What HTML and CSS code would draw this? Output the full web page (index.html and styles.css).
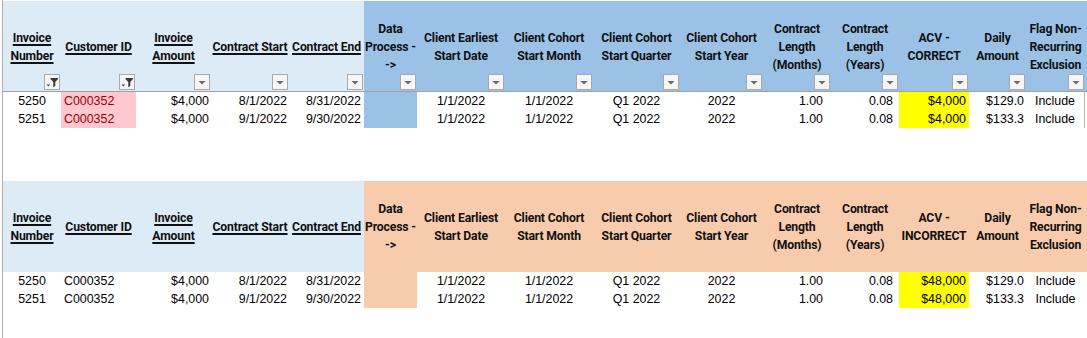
FILE: index.html
```html
<!DOCTYPE html>
<html>
<head>
<meta charset="utf-8">
<link rel="stylesheet" href="styles.css">
</head>
<body>
<div class="sheet">
  <div class="tbl top">
    <div class="row head blue">
      <div class="hc lb"><span class="u">Invoice<br>Number</span><span class="fb"><svg viewBox="0 0 14 14"><path d="M5.5 3h7.5v1l-2.7 3.1v3.9l-2 1.3V7.1L5.5 4z" fill="#3a3a3a"/><path d="M1.5 9.5h3.6L3.3 11.5z" fill="#3a3a3a"/></svg></span></div>
      <div class="hc lb"><span class="u">Customer ID</span><span class="fb"><svg viewBox="0 0 14 14"><path d="M5.5 3h7.5v1l-2.7 3.1v3.9l-2 1.3V7.1L5.5 4z" fill="#3a3a3a"/><path d="M1.5 9.5h3.6L3.3 11.5z" fill="#3a3a3a"/></svg></span></div>
      <div class="hc lb"><span class="u">Invoice<br>Amount</span><span class="fb"><svg viewBox="0 0 14 14"><path d="M3.5 6h7L7 9.5z" fill="#6a6a6a"/></svg></span></div>
      <div class="hc lb"><span class="u">Contract Start</span><span class="fb"><svg viewBox="0 0 14 14"><path d="M3.5 6h7L7 9.5z" fill="#6a6a6a"/></svg></span></div>
      <div class="hc lb"><span class="u">Contract End</span><span class="fb"><svg viewBox="0 0 14 14"><path d="M3.5 6h7L7 9.5z" fill="#6a6a6a"/></svg></span></div>
      <div class="hc"><span>Data<br>Process -<br>-&gt;</span><span class="fb"><svg viewBox="0 0 14 14"><path d="M3.5 6h7L7 9.5z" fill="#6a6a6a"/></svg></span></div>
      <div class="hc"><span>Client Earliest<br>Start Date</span><span class="fb"><svg viewBox="0 0 14 14"><path d="M3.5 6h7L7 9.5z" fill="#6a6a6a"/></svg></span></div>
      <div class="hc"><span>Client Cohort<br>Start Month</span><span class="fb"><svg viewBox="0 0 14 14"><path d="M3.5 6h7L7 9.5z" fill="#6a6a6a"/></svg></span></div>
      <div class="hc"><span>Client Cohort<br>Start Quarter</span><span class="fb"><svg viewBox="0 0 14 14"><path d="M3.5 6h7L7 9.5z" fill="#6a6a6a"/></svg></span></div>
      <div class="hc"><span>Client Cohort<br>Start Year</span><span class="fb"><svg viewBox="0 0 14 14"><path d="M3.5 6h7L7 9.5z" fill="#6a6a6a"/></svg></span></div>
      <div class="hc"><span>Contract<br>Length<br>(Months)</span><span class="fb"><svg viewBox="0 0 14 14"><path d="M3.5 6h7L7 9.5z" fill="#6a6a6a"/></svg></span></div>
      <div class="hc"><span>Contract<br>Length<br>(Years)</span><span class="fb"><svg viewBox="0 0 14 14"><path d="M3.5 6h7L7 9.5z" fill="#6a6a6a"/></svg></span></div>
      <div class="hc"><span>ACV -<br>CORRECT</span><span class="fb"><svg viewBox="0 0 14 14"><path d="M3.5 6h7L7 9.5z" fill="#6a6a6a"/></svg></span></div>
      <div class="hc"><span>Daily<br>Amount</span><span class="fb"><svg viewBox="0 0 14 14"><path d="M3.5 6h7L7 9.5z" fill="#6a6a6a"/></svg></span></div>
      <div class="hc"><span>Flag Non-<br>Recurring<br>Exclusion</span><span class="fb"><svg viewBox="0 0 14 14"><path d="M3.5 6h7L7 9.5z" fill="#6a6a6a"/></svg></span></div>
    </div>
    <div class="row data">
      <div class="c">5250</div>
      <div class="l dup">C000352</div>
      <div class="r p2">$4,000</div>
      <div class="r p2">8/1/2022</div>
      <div class="r p3">8/31/2022</div>
      <div class="proc-blue"></div>
      <div class="c">1/1/2022</div>
      <div class="c">1/1/2022</div>
      <div class="c">Q1 2022</div>
      <div class="c">2022</div>
      <div class="r p8">1.00</div>
      <div class="r p6">0.08</div>
      <div class="r p3 yel">$4,000</div>
      <div class="r p2">$129.0</div>
      <div class="c edge">Include</div>
    </div>
    <div class="row data">
      <div class="c">5251</div>
      <div class="l dup">C000352</div>
      <div class="r p2">$4,000</div>
      <div class="r p2">9/1/2022</div>
      <div class="r p3">9/30/2022</div>
      <div class="proc-blue"></div>
      <div class="c">1/1/2022</div>
      <div class="c">1/1/2022</div>
      <div class="c">Q1 2022</div>
      <div class="c">2022</div>
      <div class="r p8">1.00</div>
      <div class="r p6">0.08</div>
      <div class="r p3 yel">$4,000</div>
      <div class="r p2">$133.3</div>
      <div class="c edge">Include</div>
    </div>
  </div>

  <div class="tbl bottom">
    <div class="row head peach">
      <div class="hc lb"><span class="u">Invoice<br>Number</span></div>
      <div class="hc lb"><span class="u">Customer ID</span></div>
      <div class="hc lb"><span class="u">Invoice<br>Amount</span></div>
      <div class="hc lb"><span class="u">Contract Start</span></div>
      <div class="hc lb"><span class="u">Contract End</span></div>
      <div class="hc"><span>Data<br>Process -<br>-&gt;</span></div>
      <div class="hc"><span>Client Earliest<br>Start Date</span></div>
      <div class="hc"><span>Client Cohort<br>Start Month</span></div>
      <div class="hc"><span>Client Cohort<br>Start Quarter</span></div>
      <div class="hc"><span>Client Cohort<br>Start Year</span></div>
      <div class="hc"><span>Contract<br>Length<br>(Months)</span></div>
      <div class="hc"><span>Contract<br>Length<br>(Years)</span></div>
      <div class="hc"><span>ACV -<br>INCORRECT</span></div>
      <div class="hc"><span>Daily<br>Amount</span></div>
      <div class="hc"><span>Flag Non-<br>Recurring<br>Exclusion</span></div>
    </div>
    <div class="row data">
      <div class="c">5250</div>
      <div class="l">C000352</div>
      <div class="r p2">$4,000</div>
      <div class="r p2">8/1/2022</div>
      <div class="r p3">8/31/2022</div>
      <div class="proc-peach"></div>
      <div class="c">1/1/2022</div>
      <div class="c">1/1/2022</div>
      <div class="c">Q1 2022</div>
      <div class="c">2022</div>
      <div class="r p8">1.00</div>
      <div class="r p6">0.08</div>
      <div class="r p3 yel">$48,000</div>
      <div class="r p2">$129.0</div>
      <div class="c">Include</div>
    </div>
    <div class="row data">
      <div class="c">5251</div>
      <div class="l">C000352</div>
      <div class="r p2">$4,000</div>
      <div class="r p2">9/1/2022</div>
      <div class="r p3">9/30/2022</div>
      <div class="proc-peach"></div>
      <div class="c">1/1/2022</div>
      <div class="c">1/1/2022</div>
      <div class="c">Q1 2022</div>
      <div class="c">2022</div>
      <div class="r p8">1.00</div>
      <div class="r p6">0.08</div>
      <div class="r p3 yel">$48,000</div>
      <div class="r p2">$133.3</div>
      <div class="c">Include</div>
    </div>
  </div>
</div>
</body>
</html>
```

FILE: styles.css
```css
html, body {
  margin: 0;
  padding: 0;
  background: #ffffff;
}

.sheet {
  margin-left: 2px;
  border-left: 1px solid #b2b2b2;
  padding-top: 1px;
  height: 337px;
  font-family: "Liberation Sans", Arial, sans-serif;
  color: #000;
}

.row {
  display: grid;
  grid-template-columns: 58px 75px 75px 78px 75px 53px 88px 88px 87px 83px 68px 68px 70px 57px 59px;
}

.head.blue {
  background: #9bc2e6;
  height: 90px;
  border-bottom: 1px solid #a0a0a0;
}

.head.peach {
  background: #f8cbad;
  height: 91px;
}

.bottom {
  margin-top: 53px;
}

.hc {
  position: relative;
  display: flex;
  align-items: center;
  justify-content: center;
  text-align: center;
  white-space: nowrap;
  font-family: Roboto, "Liberation Sans", sans-serif;
  font-weight: bold;
  font-size: 12.2px;
  letter-spacing: -0.15px;
  line-height: 18px;
  color: #111;
}

.blue .hc {
  padding-top: 2px;
}

.hc.lb {
  background: #ddebf7;
}

.u {
  text-decoration: underline;
  text-decoration-thickness: 1.5px;
  text-underline-offset: 2px;
}

.fb {
  position: absolute;
  right: 1px;
  bottom: 1px;
  width: 14px;
  height: 14px;
  border: 1px solid #a9a9a9;
  background: #f6f6f6;
  display: flex;
}

.fb svg {
  width: 14px;
  height: 14px;
}

.data > div {
  height: 18px;
  line-height: 18px;
  font-size: 12.4px;
  white-space: nowrap;
  overflow: hidden;
}

.c { text-align: center; }
.l { text-align: left; padding-left: 3px; }
.r { text-align: right; }
.p2 { padding-right: 2px; }
.p3 { padding-right: 3px; }
.p6 { padding-right: 6px; }
.p8 { padding-right: 8px; }

.dup {
  background: #ffc7ce;
  color: #9c0006;
}

.yel {
  background: #ffff00;
}

.proc-blue {
  background: #9bc2e6;
}

.proc-peach {
  background: #f8cbad;
}

.edge {
  border-right: 1px solid #b8b8b8;
}
```
